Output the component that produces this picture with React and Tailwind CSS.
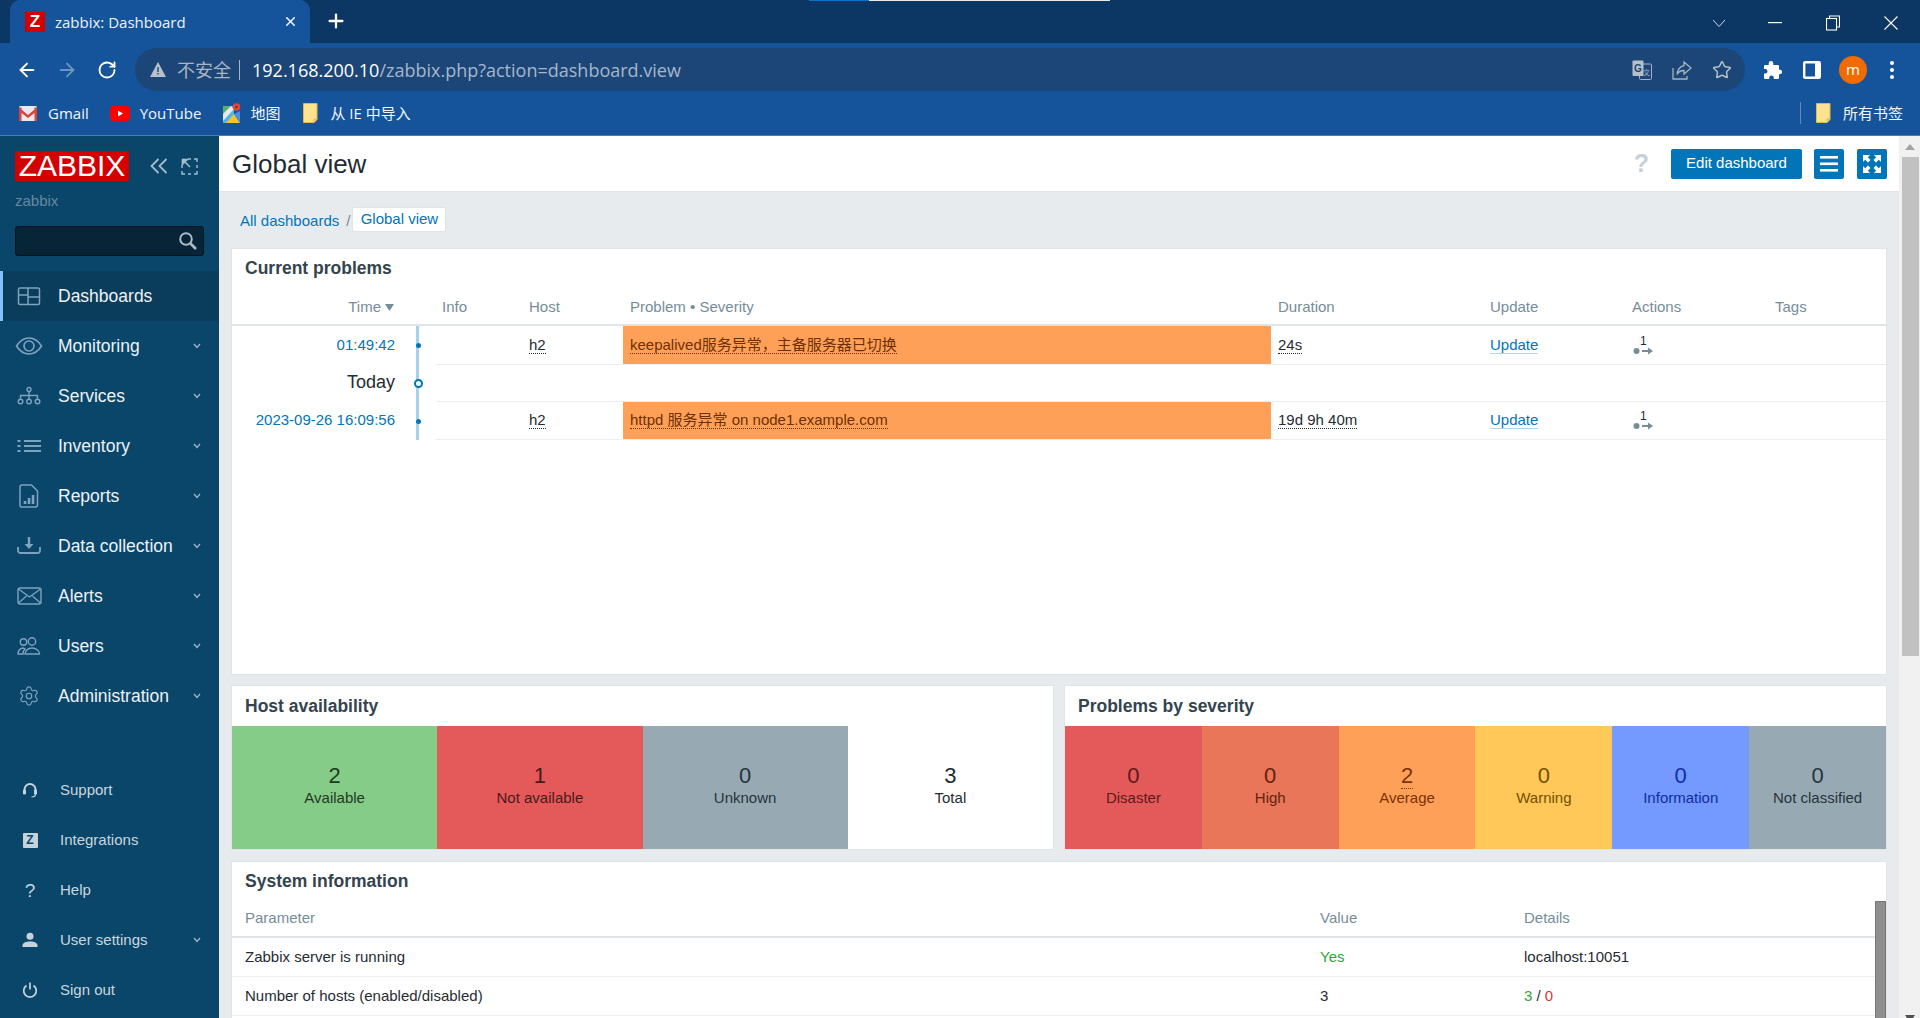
import React from "react";
import { ArrowLeft, ArrowRight, RotateCw, Star, Plus, X, Settings } from "lucide-react";

const S = ({ w = 24, h = 24, vb, children, className = "" }) => (
  <svg width={w} height={h} viewBox={vb || `0 0 ${w} ${h}`} fill="none" stroke="currentColor" className={className}>
    {children}
  </svg>
);

const Chevron = () => (
  <svg width="8" height="6" viewBox="0 0 8 6" fill="none" stroke="#9fb6c6" strokeWidth="1.3"><path d="M1 1l3 3.5L7 1" /></svg>
);

const icons = {
  dash: <S w={24} h={20}><g strokeWidth="1.5"><rect x="1.5" y="2" width="21" height="16.5" rx="1.5" /><path d="M11 2v16.5M1.5 9h9.5M11 11h11.5" /></g></S>,
  eye: <S w={28} h={20}><g strokeWidth="1.6"><path d="M1.5 10C5 4.5 9 2 14 2s9 2.500 12.500 8C23 15.500 19 18 14 18S5 15.500 1.500 10z" /><circle cx="14" cy="10" r="5" /></g></S>,
  services: <S w={24} h={20}><g strokeWidth="1.400"><circle cx="12" cy="3.500" r="2" /><path d="M12 5.500v4M3.500 13V9.500h17V13M12 9.500V13" /><circle cx="3.500" cy="15.500" r="2.300" /><circle cx="12" cy="15.500" r="2.300" /><circle cx="20.500" cy="15.500" r="2.300" /></g></S>,
  inventory: <S w={24} h={14}><g strokeWidth="2.200"><path d="M7 2h17M7 7h17M7 12h17" /><path d="M0.500 2h3M0.500 7h3M0.500 12h3" /></g></S>,
  reports: <S w={20} h={24}><g strokeWidth="1.500"><path d="M2.500 1h10l6 6v14a2 2 0 0 1-2 2h-14a1.500 1.500 0 0 1-1.500-1.500V3a2 2 0 0 1 1.500-2z" /><path d="M6 20v-3M10 20v-6M14 20v-9" strokeWidth="2.600" /></g></S>,
  data: <S w={24} h={20}><g strokeWidth="1.800"><path d="M1 11v3.500a2.500 2.500 0 0 0 2.500 2.500h17a2.500 2.500 0 0 0 2.500-2.500V11" /><path d="M12 1v8" strokeWidth="2.400" /></g><path d="M7.500 8h9L12 13z" fill="currentColor" stroke="none" /></S>,
  alerts: <S w={25} h={18}><g strokeWidth="1.400"><rect x="1" y="1" width="23" height="16" rx="2" /><path d="M1.500 2l11 8 11-8M1.500 16l8-7M23.500 16l-8-7" /></g></S>,
  users: <S w={24} h={18}><g strokeWidth="1.400"><circle cx="6.500" cy="5" r="3.200" /><circle cx="15" cy="4.500" r="3.700" /><path d="M1 17c0-3 2-5.500 5-6 1 .2 1.500.5 2 1-1.500 1-2 3-2 5zM8 17c0-3.500 3-6 7-6s7.500 2.500 7.500 6z" /></g></S>,
  admin: <Settings size={22} strokeWidth={1.3} />,
  support: <S w={16} h={16}><g strokeWidth="2"><path d="M2.500 9V7.500a5.500 5.500 0 0 1 11 0V9" /></g><rect x="1" y="7.500" width="3" height="5" rx="1.200" fill="currentColor" stroke="none" /><rect x="12" y="7.500" width="3" height="5" rx="1.200" fill="currentColor" stroke="none" /><path d="M13.500 12c0 2-2 3-4 3" strokeWidth="1.200" /></S>,
  integrations: <div className="flex h-[15px] w-[15px] items-center justify-center rounded-[1px] bg-[#c5d3dd] text-[12px] font-bold leading-none text-[#0a466a]">Z</div>,
  help: <span className="text-[19px] leading-none text-[#c5d3dd]">?</span>,
  user: <svg width="16" height="16" viewBox="0 0 16 16" fill="currentColor"><circle cx="8" cy="4.200" r="3.500" /><path d="M0.500 15v-1.500c0-2.500 3-4 7.500-4s7.500 1.500 7.500 4V15z" /></svg>,
  power: <S w={16} h={16}><g strokeWidth="1.700"><path d="M4.500 3.500a6.300 6.300 0 1 0 7 0M8 0.500v7" /></g></S>,
};

const mainMenu = [
  ["Dashboards", "dash", true],
  ["Monitoring", "eye"],
  ["Services", "services"],
  ["Inventory", "inventory"],
  ["Reports", "reports"],
  ["Data collection", "data"],
  ["Alerts", "alerts"],
  ["Users", "users"],
  ["Administration", "admin"],
];

const bottomMenu = [
  ["Support", "support"],
  ["Integrations", "integrations"],
  ["Help", "help"],
  ["User settings", "user", true],
  ["Sign out", "power"],
];

const Folder = () => (
  <svg width="15" height="20" viewBox="0 0 15 20">
    <path d="M.5.500h13.500v16l-3 3H.5z" fill="#fee28f" stroke="#e3b94f" />
    <path d="M11 19.500V16h3" fill="#f6cf6b" stroke="#e3b94f" />
  </svg>
);

function Sidebar() {
  return (
    <aside className="flex h-full w-[219px] shrink-0 flex-col bg-[#0a466a] font-['Liberation_Sans',sans-serif]">
      <div className="h-[135px] px-[15px] pt-[15px]">
        <div className="flex items-center">
          <div className="flex h-[30px] w-[114px] items-center justify-center bg-[#d40000] text-[30px] leading-none text-white">ZABBIX</div>
          <svg className="ml-[21px]" width="18" height="16" viewBox="0 0 18 16" fill="none" stroke="#a5bccb" strokeWidth="1.800"><path d="M8.500 1L1.500 8l7 7M16.500 1l-7 7 7 7" /></svg>
          <svg className="ml-[13px]" width="17" height="17" viewBox="0 0 17 17" fill="none" stroke="#a5bccb"><path d="M7 1h3M13 1h3v3M16 7v3M16 13v3h-3M10 16H7M4 16H1v-3M1 10V7" strokeWidth="1.400" /><path d="M1 1h6.500L1 7.500z" fill="#a5bccb" strokeWidth="0.600" /><path d="M4 4l5 5" strokeWidth="1.400" /></svg>
        </div>
        <div className="mt-[11px] text-[15px] leading-[18px] text-[#69889d]">zabbix</div>
        <div className="mt-[16px] flex h-[30px] w-[189px] items-center justify-end rounded-[3px] border border-[#05141e] bg-[#082537] pr-[5px]">
          <svg width="20" height="20" viewBox="0 0 20 20" fill="none" stroke="#a9bcc8"><circle cx="8" cy="8" r="5.800" strokeWidth="2" /><path d="M12.500 12.500l5.500 5.500" strokeWidth="2.600" /></svg>
        </div>
      </div>
      <nav className="flex flex-col">
        {mainMenu.map(([label, icon, active]) => (
          <div key={label} className={active ? "flex h-[50px] items-center border-l-[3px] border-[#7fc4f5] bg-[#0a3c5b]" : "flex h-[50px] items-center border-l-[3px] border-transparent"}>
            <div className="flex w-[55px] justify-center pr-[3px] text-[#7ea3bd]">{icons[icon]}</div>
            <div className="flex-1 text-[17.500px] text-[#edf2f5]">{label}</div>
            {!active && <div className="mr-[18px] flex"><Chevron /></div>}
          </div>
        ))}
      </nav>
      <nav className="mt-auto flex flex-col pb-[3px]">
        {bottomMenu.map(([label, icon, more]) => (
          <div key={label} className="flex h-[50px] items-center">
            <div className="flex w-[60px] justify-center text-[#c5d3dd]">{icons[icon]}</div>
            <div className="flex-1 text-[15px] text-[#c9d6df]">{label}</div>
            {more && <div className="mr-[18px] flex"><Chevron /></div>}
          </div>
        ))}
      </nav>
    </aside>
  );
}

const Card = ({ title, className = "", titleH = "h-[39px]", children }) => (
  <section className={`border border-[#dfe4e7] bg-white ${className}`}>
    <h4 className={`flex ${titleH} items-center pl-[13px] text-[17.500px] font-bold text-[#34444e]`}>{title}</h4>
    {children}
  </section>
);

const probCols = "grid grid-cols-[163px_41px_87px_100px_648px_212px_142px_143px_1fr]";

const Timeline = ({ kind }) => (
  <div className="relative flex items-center justify-center pl-[6px]">
    <div className="absolute bottom-0 left-[21px] top-0 w-[3px] bg-[#a6d2ee]" />
    {kind === "dot" ? (
      <div className="relative h-[5px] w-[5px] rounded-full bg-[#0275b8]" />
    ) : (
      <div className="relative h-[9px] w-[9px] rounded-full border-2 border-[#0275b8] bg-white" />
    )}
  </div>
);

const ActionIcon = () => (
  <div className="flex w-[22px] flex-col items-start">
    <span className="pl-[8px] text-[12px] leading-[12px] text-[#1f2c33]">1</span>
    <svg width="22" height="8" viewBox="0 0 22 8"><circle cx="4.500" cy="4" r="3" fill="#768d99" /><path d="M10 3h6V0.500L21 4l-5 3.500V5h-6z" fill="#768d99" /></svg>
  </div>
);

const ProblemRow = ({ time, problem, duration, h, pad = "" }) => (
  <div className={`${probCols} ${h} text-[15px]`}>
    <div className={`flex items-center justify-end text-[#0275b8] ${pad}`}>{time}</div>
    <Timeline kind="dot" />
    <div className="border-b border-[#ebeef0]" />
    <div className={`flex items-center border-b border-[#ebeef0] pl-[6px] ${pad}`}><span className="border-b border-dotted border-[#1f2c33] leading-[17px] text-[#1f2c33]">h2</span></div>
    <div className={`flex items-center border-b border-[#ebeef0] bg-[#ffa059] bg-clip-padding pl-[7px] ${pad}`}><span className="border-b border-dotted border-[#6b3000] leading-[17px] text-[#6e3000]">{problem}</span></div>
    <div className={`flex items-center border-b border-[#ebeef0] pl-[7px] ${pad}`}><span className="border-b border-dotted border-[#1f2c33] leading-[17px] text-[#1f2c33]">{duration}</span></div>
    <div className={`flex items-center border-b border-[#ebeef0] pl-[7px] ${pad}`}><span className="border-b border-[#b5d5ea] leading-[17px] text-[#0275b8]">Update</span></div>
    <div className={`flex items-center border-b border-[#ebeef0] pl-[7px] ${pad}`}><ActionIcon /></div>
    <div className="border-b border-[#ebeef0]" />
  </div>
);

const Tile = ({ n, label, bg, fg, under }) => (
  <div className={`flex-1 ${bg} ${fg} flex flex-col items-center pt-[37px]`}>
    <div className="text-[22px] leading-[26px]"><span className={under ? "border-b border-dotted border-current" : ""}>{n}</span></div>
    <div className="text-[15px] leading-[18px]">{label}</div>
  </div>
);

const th = "text-[15px] text-[#768d99]";

function Content() {
  return (
    <div className="h-full min-w-0 flex-1 overflow-hidden bg-[#e8ebee] font-['Liberation_Sans','Noto_Sans_CJK_SC',sans-serif]">
      <header className="flex h-[56px] items-center border-b border-[#dfe4e7] bg-white pl-[13px] pr-[12px]">
        <h1 className="flex-1 pt-[2px] text-[26px] text-[#1f2c33]">Global view</h1>
        <span className="mr-[22px] text-[25px] font-bold text-[#c6d1d9]">?</span>
        <button className="h-[30px] w-[131px] rounded-[2px] bg-[#0275b8] text-[15px] text-white">Edit dashboard</button>
        <button className="ml-[12px] flex h-[30px] w-[30px] items-center justify-center rounded-[2px] bg-[#0275b8]">
          <svg width="18" height="18" viewBox="0 0 18 18" fill="#fff"><rect y="1" width="18" height="2.600" /><rect y="7.500" width="18" height="2.600" /><rect y="14" width="18" height="2.600" /></svg>
        </button>
        <button className="ml-[13px] flex h-[30px] w-[30px] items-center justify-center rounded-[2px] bg-[#0275b8]">
          <svg width="18" height="18" viewBox="0 0 18 18" fill="#fff"><path d="M0 0h7L4.800 2.200 7.500 5 5 7.500 2.200 4.800 0 7zM18 0v7l-2.200-2.200L13 7.500 10.500 5l2.700-2.800L11 0zM0 18v-7l2.200 2.200L5 10.500 7.500 13l-2.700 2.800L7 18zM18 18h-7l2.200-2.200-2.700-2.800 2.500-2.500 2.800 2.700L18 11z" /></svg>
        </button>
      </header>
      <div className="px-[12px]">
        <div className="flex h-[56px] items-start pl-[9px] pt-[15px] text-[15px]">
          <span className="mt-[3px] text-[#0275b8]">All dashboards</span>
          <span className="ml-[7px] mt-[3px] text-[#768d99]">/</span>
          <span className="ml-[2px] flex h-[25px] w-[94px] items-center justify-center rounded-[2px] border border-[#dfe4e7] bg-white text-[#0275b8]">Global view</span>
        </div>
        <Card title="Current problems" className="h-[427px]">
          <div className={`${probCols} h-[38px] items-center border-b-2 border-[#dfe4e7] pt-[2px] ${th}`}>
            <div className="flex items-center justify-end pr-[1px]">Time<svg className="ml-[4px]" width="9" height="7" viewBox="0 0 9 7" fill="#768d99"><path d="M0 0h9L4.500 7z" /></svg></div>
            <div />
            <div className="pl-[6px]">Info</div>
            <div className="pl-[6px]">Host</div>
            <div className="pl-[7px]">Problem • Severity</div>
            <div className="pl-[7px]">Duration</div>
            <div className="pl-[7px]">Update</div>
            <div className="pl-[7px]">Actions</div>
            <div className="pl-[7px]">Tags</div>
          </div>
          <ProblemRow h="h-[39px]" time="01:49:42" problem="keepalived服务异常，主备服务器已切换" duration="24s" />
          <div className={`${probCols} h-[37px]`}>
            <div className="flex items-center justify-end pb-[2px] text-[18px] text-[#1f2c33]">Today</div>
            <Timeline kind="ring" />
            <div className="col-span-7 border-b border-[#ebeef0]" />
          </div>
          <ProblemRow h="h-[38px]" pad="pb-[2px]" time="2023-09-26 16:09:56" problem="httpd 服务异常 on node1.example.com" duration="19d 9h 40m" />
        </Card>
        <div className="mt-[10px] grid grid-cols-2 gap-[10px]">
          <Card title="Host availability" titleH="h-[40px]" className="h-[165px]">
            <div className="flex h-[123px]">
              <Tile n="2" label="Available" bg="bg-[#86cc89]" fg="text-[#1e3a20]" />
              <Tile n="1" label="Not available" bg="bg-[#e45959]" fg="text-[#4a1a1a]" />
              <Tile n="0" label="Unknown" bg="bg-[#97aab3]" fg="text-[#26343c]" />
              <Tile n="3" label="Total" bg="bg-white" fg="text-[#1f2c33]" />
            </div>
          </Card>
          <Card title="Problems by severity" titleH="h-[40px]" className="h-[165px]">
            <div className="flex h-[123px]">
              <Tile n="0" label="Disaster" bg="bg-[#e45959]" fg="text-[#5c1a1a]" />
              <Tile n="0" label="High" bg="bg-[#e97659]" fg="text-[#64220f]" />
              <Tile n="2" label="Average" bg="bg-[#ffa059]" fg="text-[#7a3300]" under />
              <Tile n="0" label="Warning" bg="bg-[#ffc859]" fg="text-[#735000]" />
              <Tile n="0" label="Information" bg="bg-[#7499ff]" fg="text-[#0e2f9e]" />
              <Tile n="0" label="Not classified" bg="bg-[#97aab3]" fg="text-[#26343c]" />
            </div>
          </Card>
        </div>
        <Card title="System information" className="relative mt-[11px] h-[300px]">
          <div className={`grid h-[37px] grid-cols-[1075px_204px_1fr] items-center border-b-2 border-[#dfe4e7] pl-[13px] ${th}`}>
            <div>Parameter</div><div>Value</div><div>Details</div>
          </div>
          <div className="grid h-[39px] grid-cols-[1075px_204px_1fr] items-center border-b border-[#ebeef0] pl-[13px] text-[15px] text-[#1f2c33]">
            <div>Zabbix server is running</div><div className="text-[#34a13d]">Yes</div><div>localhost:10051</div>
          </div>
          <div className="grid h-[39px] grid-cols-[1075px_204px_1fr] items-center border-b border-[#ebeef0] pl-[13px] text-[15px] text-[#1f2c33]">
            <div>Number of hosts (enabled/disabled)</div><div>3</div><div><span className="text-[#34a13d]">3</span> / <span className="text-[#e33734]">0</span></div>
          </div>
          <div className="absolute bottom-0 right-0 top-[39px] w-[11px] border border-[#777] bg-[#8f8f8f]" />
        </Card>
      </div>
    </div>
  );
}

const Scrollbar = () => (
  <div className="flex h-full w-[21px] shrink-0 flex-col items-center bg-[#f1f1f1]">
    <svg className="mt-[8px]" width="10" height="6" viewBox="0 0 10 6" fill="#a3a3a3"><path d="M5 0l5 6H0z" /></svg>
    <div className="ml-[1px] mt-[7px] h-[499px] w-[17px] bg-[#c1c1c1]" />
    <svg className="mt-auto" width="10" height="3" viewBox="0 0 10 3" fill="#505050"><path d="M0 0h10L8 3H2z" /></svg>
  </div>
);

function ChromeUI() {
  return (
    <div className="font-['Open_Sans','Noto_Sans_CJK_SC',sans-serif] text-white">
      <div className="relative flex h-[43px] items-end bg-[#0c3764]">
        <div className="absolute left-[809px] top-0 flex h-px">
          <div className="h-px w-[60px] bg-[#0a72c8]" />
          <div className="h-px w-[241px] bg-[#e8e8e8]" />
        </div>
        <div className="ml-[10px] flex h-[43px] w-[300px] items-center rounded-t-[10px] bg-[#15549a] pl-[15px]">
          <div className="flex h-[20px] w-[20px] items-center justify-center bg-[#d40000] font-['Liberation_Sans',sans-serif] text-[17px] font-bold text-white">Z</div>
          <div className="ml-[10px] flex-1 pt-[1px] text-[15px] leading-none text-[#eef3f8]">zabbix: Dashboard</div>
          <X className="mr-[12px]" size={15} strokeWidth={2.500} color="#f0f4f8" />
        </div>
        <Plus className="mb-[11px] ml-[15px]" size={22} strokeWidth={2.500} color="#fff" />
        <div className="flex-1" />
        <div className="mb-[12px] flex items-center">
          <svg width="14" height="9" viewBox="0 0 14 9" fill="none" stroke="#cfd9e4"><path d="M1 1l6 6.500L13 1" /></svg>
          <svg className="ml-[42px]" width="14" height="2" viewBox="0 0 14 2" fill="#fff"><rect width="14" height="1.200" /></svg>
          <svg className="ml-[44px]" width="14" height="16" viewBox="0 0 14 16" fill="none" stroke="#fff" strokeWidth="1.100"><rect x="0.500" y="3.500" width="10" height="11.500" /><path d="M3.500 3.500V1h10v11h-3" /></svg>
          <svg className="ml-[44px] mr-[22px]" width="14" height="14" viewBox="0 0 14 14" fill="none" stroke="#fff" strokeWidth="1.100"><path d="M.5.500l13 13M13.500.500l-13 13" /></svg>
        </div>
      </div>
      <div className="flex h-[48px] items-start bg-[#15549a] pt-[5px]">
        <div className="flex h-[43px] items-center">
          <ArrowLeft className="ml-[16px]" size={22} strokeWidth={2} color="#fff" />
          <ArrowRight className="ml-[18px]" size={22} strokeWidth={2} color="#6d94c0" />
          <RotateCw className="ml-[19px]" size={20} strokeWidth={2.200} color="#fff" />
        </div>
        <div className="ml-[18px] flex h-[43px] w-[1610px] items-center rounded-full bg-[#1c4677] pl-[15px]">
          <svg width="16" height="15" viewBox="0 0 16 15"><path d="M8 0l8 15H0z" fill="#b8c0c9" /><path d="M7.300 5h1.400v5H7.300zM7.300 11h1.400v1.500H7.300z" fill="#1c4677" /></svg>
          <span className="ml-[11px] text-[18px] leading-none text-[#a8b5c4]">不安全</span>
          <div className="ml-[8px] h-[20px] w-px bg-[#a8b5c4]" />
          <span className="ml-[12px] text-[18px] leading-none text-white">192.168.200.10</span>
          <span className="text-[18px] leading-none text-[#a5b7cc]">/zabbix.php?action=dashboard.view</span>
          <div className="flex-1" />
          <svg width="20" height="20" viewBox="0 0 20 20">
            <rect x="7.500" y="4" width="12" height="15.500" rx="1" fill="none" stroke="#a5b2c0" />
            <rect x="0.500" y="0.500" width="11" height="15.500" rx="1" fill="#b6bfca" />
            <text x="6" y="12" textAnchor="middle" fontSize="10" fontWeight="700" fill="#1c4677" fontFamily="Liberation Sans">G</text>
            <text x="14.500" y="15" textAnchor="middle" fontSize="7" fill="#a5b2c0" fontFamily="Noto Sans CJK SC">文</text>
          </svg>
          <svg className="ml-[20px]" width="20" height="20" viewBox="0 0 20 20" fill="none" stroke="#a5b2c0" strokeWidth="1.300"><path d="M1 8v11h14v-3" /><path d="M12 2l7 6-7 6v-3.500c-3 0-5.500 1-7 4 .5-4.500 3-8 7-9z" /></svg>
          <Star className="ml-[20px]" size={20} strokeWidth={1.800} color="#b3bec9" />
          <div className="w-[13px]" />
        </div>
        <div className="flex h-[43px] items-center">
          <svg className="ml-[19px]" width="18" height="18" viewBox="0 0 18 18" fill="#fff"><path d="M7 0a2.300 2.300 0 0 1 2.300 2.300V4H14a1 1 0 0 1 1 1v3.700h.8a2.200 2.200 0 0 1 0 4.600H15V17a1 1 0 0 1-1 1H9.800v-1.200a2.300 2.300 0 0 0-4.600 0V18H1a1 1 0 0 1-1-1v-4.500h1.200a2.300 2.300 0 0 0 0-4.600H0V5a1 1 0 0 1 1-1h3.700V2.300A2.300 2.300 0 0 1 7 0z" /></svg>
          <svg className="ml-[21px]" width="18" height="18" viewBox="0 0 18 18" fill="none" stroke="#fff" strokeWidth="2.400"><rect x="1.200" y="1.200" width="15.600" height="15.600" rx="1" /><rect x="12" y="2" width="4" height="14" fill="#fff" stroke="none" /></svg>
          <div className="ml-[18px] flex h-[28px] w-[28px] items-center justify-center rounded-full bg-[#f06c00] text-[15px] leading-none">m</div>
          <svg className="ml-[23px]" width="4" height="20" viewBox="0 0 4 20" fill="#fff"><circle cx="2" cy="3" r="2" /><circle cx="2" cy="10" r="2" /><circle cx="2" cy="17" r="2" /></svg>
        </div>
      </div>
      <div className="flex h-[45px] items-center border-b border-[#4a7cb4] bg-[#15549a] text-[15px] leading-none text-[#f2f5f9]">
        <svg className="ml-[19px]" width="18" height="15" viewBox="0 0 18 15"><rect width="18" height="15" rx="1.500" fill="#e9e9e9" /><path d="M0 1.500L9 9l9-7.500V5L9 12 0 5z" fill="#d8433a" /><path d="M0 1.500h2.500V15H1a1 1 0 0 1-1-1zM15.500 1.500H18V14a1 1 0 0 1-1 1h-1.500z" fill="#d8433a" /></svg>
        <span className="ml-[11px]">Gmail</span>
        <svg className="ml-[21px]" width="20" height="15" viewBox="0 0 20 15"><rect width="20" height="15" rx="3.500" fill="#f00" /><path d="M8 4.500l5 3-5 3z" fill="#fff" /></svg>
        <span className="ml-[10px]">YouTube</span>
        <svg className="ml-[22px]" width="18" height="20" viewBox="0 0 18 20"><path d="M0 3l11 0v17H0z" fill="#4db6e8" /><path d="M0 3h8L0 11z" fill="#58b368" /><path d="M0 11l8-8 3 3-11 12z" fill="#e8e8e8" /><path d="M3 20l8-9 6 9z" fill="#f3c623" /><path d="M11 11l6-3v12z" fill="#4a8ee8" /><circle cx="13.500" cy="4" r="3.800" fill="#de4b3e" /><circle cx="13.500" cy="4" r="1.300" fill="#8e2a22" /></svg>
        <span className="ml-[9px]">地图</span>
        <div className="ml-[23px] flex"><Folder /></div>
        <span className="ml-[12px]">从 IE 中导入</span>
        <div className="flex-1" />
        <div className="h-[22px] w-px bg-[#5f8bb9]" />
        <div className="ml-[15px] flex"><Folder /></div>
        <span className="ml-[12px] mr-[17px]">所有书签</span>
      </div>
    </div>
  );
}

export default function App() {
  return (
    <div className="flex h-[1018px] w-[1920px] flex-col overflow-hidden">
      <ChromeUI />
      <main className="flex h-[882px]">
        <Sidebar />
        <Content />
        <Scrollbar />
      </main>
    </div>
  );
}
